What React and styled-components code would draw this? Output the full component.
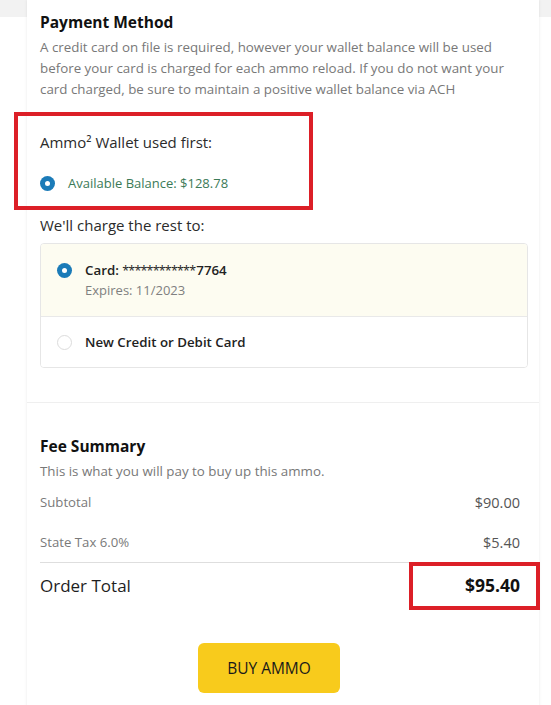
import React from 'react'
import styled, { createGlobalStyle } from 'styled-components'

const GlobalStyle = createGlobalStyle`
  html, body {
    margin: 0;
    padding: 0;
    background: #fff;
  }
  body {
    font-family: "Open Sans", "Noto Sans", Arial, sans-serif;
    color: #222;
  }
`

const Page = styled.div`
  min-height: 705px;
  background: linear-gradient(#f2f2f2 0 17px, #fff 17px);
  overflow: hidden;
`

const Card = styled.div`
  margin: 0 12px 0 27px;
  background: #fff;
  box-shadow: 0 0 3px rgba(0, 0, 0, 0.09);
  min-height: 705px;
`

const Section = styled.section`
  padding: ${(p) => p.$pad};
  & + & {
    border-top: 1px solid #efefef;
  }
`

const Title = styled.h2`
  margin: 0;
  font-size: 15.5px;
  line-height: 22px;
  font-weight: 700;
  color: #111;
`

const Lead = styled.p`
  margin: ${(p) => p.$margin || '4px 0 0'};
  font-size: 13.35px;
  line-height: 21px;
  color: #787878;
`

const Highlight = styled.div`
  margin: 12px 0 0 -26px;
  width: 269px;
  border: 4px solid #dc1f27;
  padding: 15px 0 13px 22px;
`

const Label = styled.div`
  margin: ${(p) => p.$margin || '0'};
  font-size: 15px;
  line-height: 22px;
  color: #2b2b2b;
`

const Choice = styled.div`
  display: flex;
  align-items: center;
  gap: 13px;
  margin-top: 20px;
  height: 20px;
  font-size: 13px;
  color: #3b7a57;
`

const Radio = styled.span`
  flex: none;
  width: 15px;
  height: 15px;
  border-radius: 50%;
  box-sizing: border-box;
  background: ${(p) => (p.$checked ? '#1b7bb8' : '#fff')};
  border: ${(p) => (p.$checked ? 'none' : '1px solid #dcdcdc')};
  display: flex;
  align-items: center;
  justify-content: center;
  &::after {
    content: '';
    display: ${(p) => (p.$checked ? 'block' : 'none')};
    width: 5px;
    height: 5px;
    border-radius: 50%;
    background: #fff;
  }
`

const Options = styled.div`
  margin-top: 7px;
  border: 1px solid #e6e6e6;
  border-radius: 4px;
  overflow: hidden;
`

const Option = styled.div`
  display: flex;
  align-items: flex-start;
  gap: 13px;
  padding: ${(p) => p.$pad};
  background: ${(p) => (p.$active ? '#fdfcf1' : '#fff')};
  & + & {
    border-top: 1px solid #e9e9e9;
  }
  ${Radio} {
    margin-top: 2.5px;
  }
`

const OptionText = styled.div`
  display: flex;
  flex-direction: column;
`

const OptionName = styled.div`
  height: 20px;
  font-size: 13.3px;
  line-height: 20px;
  font-weight: 600;
  color: #222;
`

const Mask = styled.span`
  font-size: 12.5px;
  line-height: 0;
  font-weight: 400;
  letter-spacing: -0.8px;
  margin-right: 1px;
`

const OptionMeta = styled.div`
  font-size: 13px;
  line-height: 20px;
  color: #808080;
`

const Row = styled.div`
  display: flex;
  justify-content: space-between;
  align-items: center;
  height: ${(p) => p.$h || 40}px;
  border-top: ${(p) => (p.$line ? '1px solid #dedede' : 'none')};
`

const RowLabel = styled.span`
  font-size: 13.2px;
  color: #7a7a7a;
`

const RowValue = styled.span`
  font-size: 14.5px;
  color: #555;
`

const TotalLabel = styled.span`
  font-size: 17px;
  color: #1e1e1e;
`

const TotalValue = styled.span`
  position: relative;
  font-size: 17.5px;
  line-height: 26px;
  font-weight: 700;
  color: #111;
  &::after {
    content: '';
    position: absolute;
    left: -56px;
    right: -20px;
    top: -10px;
    bottom: -12px;
    border: 4px solid #dc1f27;
  }
`

const Actions = styled.div`
  display: flex;
  justify-content: center;
  margin-top: 36px;
`

const BuyButton = styled.button`
  width: 142px;
  height: 50px;
  margin-left: -22px;
  border: none;
  border-radius: 6px;
  background: #f8cb1c;
  color: #1a1a1a;
  font-family: inherit;
  font-size: 15.5px;
  font-weight: 500;
`

export default function App() {
  return (
    <Page>
      <GlobalStyle />
      <Card>
        <Section $pad="11px 11px 34px 13px">
          <Title>Payment Method</Title>
          <Lead>
            A credit card on file is required, however your wallet balance will be used
            before your card is charged for each ammo reload. If you do not want your
            card charged, be sure to maintain a positive wallet balance via ACH
          </Lead>

          <Highlight>
            <Label>Ammo² Wallet used first:</Label>
            <Choice>
              <Radio $checked />
              Available Balance: $128.78
            </Choice>
          </Highlight>

          <Label $margin="4px 0 0">We'll charge the rest to:</Label>
          <Options>
            <Option $active $pad="16px 16px">
              <Radio $checked />
              <OptionText>
                <OptionName>
                  Card: <Mask>************</Mask>7764
                </OptionName>
                <OptionMeta>Expires: 11/2023</OptionMeta>
              </OptionText>
            </Option>
            <Option $pad="15px 16px">
              <Radio />
              <OptionText>
                <OptionName>New Credit or Debit Card</OptionName>
              </OptionText>
            </Option>
          </Options>
        </Section>

        <Section $pad="32px 19px 20px 13px">
          <Title>Fee Summary</Title>
          <Lead $margin="4px 0 0">This is what you will pay to buy up this ammo.</Lead>
          <Row>
            <RowLabel>Subtotal</RowLabel>
            <RowValue>$90.00</RowValue>
          </Row>
          <Row>
            <RowLabel>State Tax 6.0%</RowLabel>
            <RowValue>$5.40</RowValue>
          </Row>
          <Row $h={44} $line>
            <TotalLabel>Order Total</TotalLabel>
            <TotalValue>$95.40</TotalValue>
          </Row>
          <Actions>
            <BuyButton>BUY AMMO</BuyButton>
          </Actions>
        </Section>
      </Card>
    </Page>
  )
}
